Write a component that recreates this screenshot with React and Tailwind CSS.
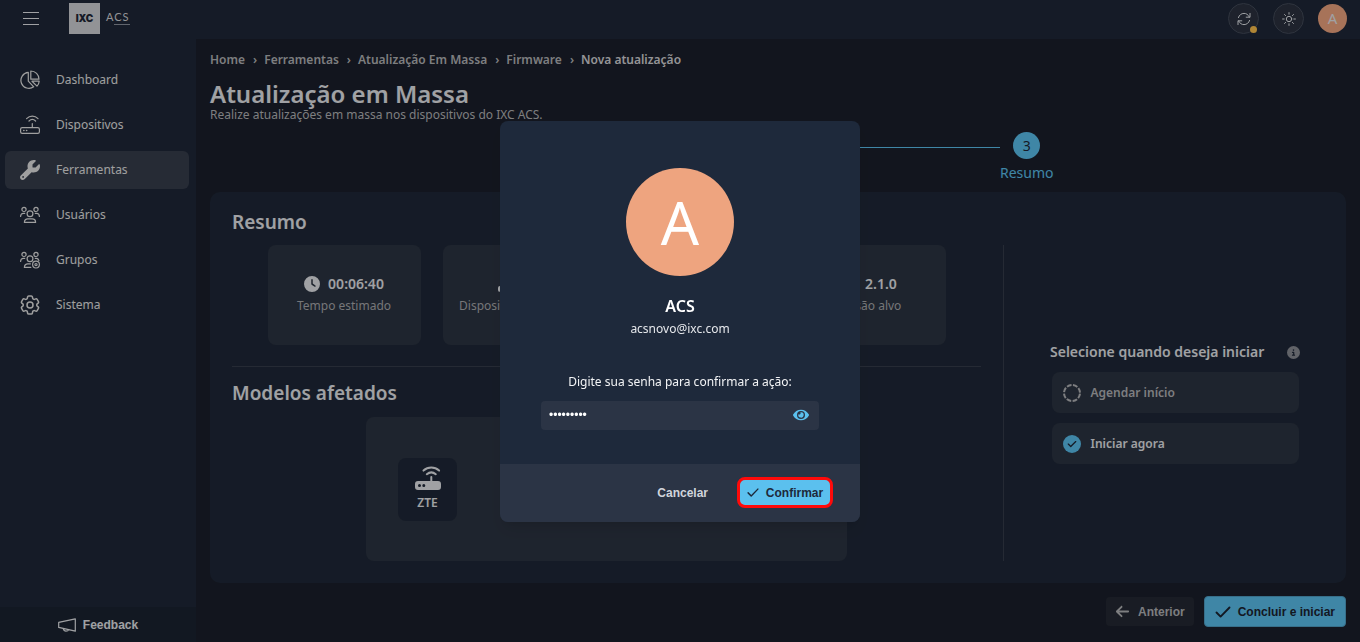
import { FaEye } from "react-icons/fa";
import { FaArrowLeft, FaCheck, FaCircleInfo, FaClock, FaWrench } from "react-icons/fa6";
import { HiOutlineCog6Tooth } from "react-icons/hi2";

function ChartPieIcon() {
    return (
        <svg viewBox="0 0 20 20" className="size-5" fill="none" stroke="currentColor" strokeWidth="1.2" strokeLinejoin="round">
            <path d="M8.3 2.4a8 8 0 1 0 5.4 14.4L8.3 11.2z" />
            <path d="M10.8 1v8.2H19A8.2 8.2 0 0 0 10.8 1z" />
            <path d="M12 11.2h7.2a8 8 0 0 1-2.2 4.9z" />
        </svg>
    );
}

function RouterIcon() {
    return (
        <svg viewBox="0 0 20 20" className="size-5" fill="none" stroke="currentColor" strokeWidth="1.2" strokeLinecap="round">
            <rect x="0.6" y="12.6" width="18.8" height="5.8" rx="1.6" />
            <path d="M12.3 12.4V8.6M6.6 3.6c3.2-3.2 8.2-3.2 11.4 0M9 6c1.9-1.8 4.7-1.8 6.6 0" />
            <path d="M3.8 15.5h.1M6.6 15.5h.1" strokeWidth="1.6" />
        </svg>
    );
}

function RouterSolidIcon({ className }) {
    return (
        <svg viewBox="0 0 26 24" className={className} fill="none" stroke="currentColor" strokeWidth="2" strokeLinecap="round">
            <path d="M16.3 15v-4M8.5 4.6c4.5-4 11.1-4 15.6 0M11.8 8.2c2.7-2.2 6.3-2.2 9 0" />
            <path
                d="M3 15h20a3 3 0 0 1 3 3v3a3 3 0 0 1-3 3H3a3 3 0 0 1-3-3v-3a3 3 0 0 1 3-3zm1.5 3a1.5 1.5 0 1 0 0 3 1.5 1.5 0 0 0 0-3zm4.3 0a1.5 1.5 0 1 0 0 3 1.5 1.5 0 0 0 0-3z"
                fill="currentColor"
                fillRule="evenodd"
                stroke="none"
            />
        </svg>
    );
}

function UsersIcon() {
    return (
        <svg viewBox="0 0 20 20" className="size-5" fill="none" stroke="currentColor" strokeWidth="1.2" strokeLinecap="round" strokeLinejoin="round">
            <circle cx="4" cy="4.4" r="2.1" />
            <circle cx="16" cy="4.4" r="2.1" />
            <circle cx="10" cy="8.8" r="2.9" />
            <path d="M.6 11.4c0-1.9 1.1-3 2.7-3h1.4M19.4 11.4c0-1.9-1.1-3-2.7-3h-1.4" />
            <path d="M4.4 17.4c0-2.3 1.4-3.6 3.4-3.6h4.4c2 0 3.4 1.3 3.4 3.6z" />
        </svg>
    );
}

function GroupsIcon() {
    return (
        <svg viewBox="0 0 20 20" className="size-5" fill="none" stroke="currentColor" strokeWidth="1.2" strokeLinecap="round" strokeLinejoin="round">
            <circle cx="4" cy="4.4" r="2.1" />
            <circle cx="16" cy="4.4" r="2.1" />
            <circle cx="10" cy="8.8" r="2.9" />
            <path d="M.6 11.4c0-1.9 1.1-3 2.7-3h1.4M18.9 10.4c-.5-1.2-1.2-2-2.4-2h-1.2" />
            <path d="M10.8 17.4H4.4c0-2.3 1.4-3.6 3.4-3.6h2.6" />
            <circle cx="16" cy="14.6" r="3.4" />
            <circle cx="16" cy="14.6" r="1.1" />
        </svg>
    );
}

function MegaphoneIcon() {
    return (
        <svg viewBox="0 0 18 14" className="h-[14px] w-[18px]" fill="none" stroke="currentColor" strokeWidth="1.2" strokeLinejoin="round">
            <path d="M.7 4.4 17.3.8v12.4L.7 9.4zM5.2 10.6c.4 1.6 1.4 2.6 2.8 2.6s2.4-.6 2.6-1.5" />
        </svg>
    );
}

function RefreshIcon() {
    return (
        <svg viewBox="0 0 14 14" className="size-[14px]" fill="none" stroke="currentColor" strokeWidth="1" strokeLinecap="round" strokeLinejoin="round">
            <path d="M1.4 5.6C2.2 3 4.4 1.4 7 1.4c2.2 0 4 1 5.4 3.6M13 1.4v3.8H9.2M12.6 8.4c-.8 2.6-3 4.2-5.6 4.2-2.2 0-4-1-5.4-3.6M1 12.6V8.8h3.8" />
        </svg>
    );
}

function SunIcon() {
    return (
        <svg viewBox="0 0 14 14" className="size-[14px]" fill="none" stroke="currentColor" strokeWidth="1" strokeLinecap="round">
            <circle cx="7" cy="7" r="2.7" />
            <path d="M7 .6v1.6M7 11.8v1.6M.6 7h1.6M11.8 7h1.6M2.5 2.5l1.1 1.1M10.4 10.4l1.1 1.1M2.5 11.5l1.1-1.1M10.4 3.6l1.1-1.1" />
        </svg>
    );
}

function Navbar() {
    return (
        <header className="flex h-[39px] items-center bg-[#1f2838] pb-[2px] pl-[23px] pr-[13px]">
            <button type="button" aria-label="Menu" className="flex h-[13px] w-4 flex-col justify-between">
                <span className="h-px w-full bg-gray-200" />
                <span className="h-px w-full bg-gray-200" />
                <span className="h-px w-full bg-gray-200" />
            </button>
            <a href="#" className="ml-[30px] flex items-center gap-[6px]">
                <span className="flex h-[31px] w-[31px] items-center justify-center bg-[#d2d3d7] font-['Inter'] text-[10px] font-black text-[#1f2838]">
                    IXC
                </span>
                <span className="pb-1 font-['Lato'] text-[11px] leading-none tracking-[1px] text-[#d2d3d7]">
                    A<span className="border-b border-[#8b919c] pb-px">CS</span>
                </span>
            </a>
            <div className="ml-auto flex items-center gap-[14px] text-gray-200">
                <button type="button" aria-label="Sincronizar" className="relative flex size-[31px] items-center justify-center rounded-full border border-[#434a59] bg-[#2b3240]">
                    <RefreshIcon />
                    <span className="absolute bottom-0 right-px size-[7px] rounded-full bg-[#fcc04d]" />
                </button>
                <button type="button" aria-label="Tema" className="flex size-[31px] items-center justify-center rounded-full border border-[#434a59] bg-[#2b3240]">
                    <SunIcon />
                </button>
                <button type="button" className="flex size-[29px] items-center justify-center rounded-full bg-[#f0a580] text-[15px]">
                    A
                </button>
            </div>
        </header>
    );
}

const menu = [
    { label: "Dashboard", icon: <ChartPieIcon /> },
    { label: "Dispositivos", icon: <RouterIcon /> },
    { label: "Ferramentas", icon: <FaWrench className="size-5" />, active: true },
    { label: "Usuários", icon: <UsersIcon /> },
    { label: "Grupos", icon: <GroupsIcon /> },
    { label: "Sistema", icon: <HiOutlineCog6Tooth className="-mx-[2px] size-6" /> },
];

function Sidebar() {
    return (
        <aside className="flex w-[196px] shrink-0 flex-col bg-[#1f2838]">
            <nav className="flex flex-1 flex-col gap-[7px] pl-[5px] pr-[7px] pt-[22px]">
                {menu.map((item) => (
                    <a
                        key={item.label}
                        href="#"
                        className={`flex h-[38px] items-center gap-4 rounded-md pl-[15px] text-[12px] text-[#e4e4e4] ${item.active ? "bg-[#373e4d]" : ""}`}
                    >
                        {item.icon}
                        {item.label}
                    </a>
                ))}
            </nav>
            <button type="button" className="flex h-[35px] items-center justify-center gap-[7px] bg-[#1b2331] font-['Liberation_Sans'] text-[12px] font-bold text-gray-200">
                <MegaphoneIcon />
                Feedback
            </button>
        </aside>
    );
}

function Breadcrumb() {
    const items = ["Home", "Ferramentas", "Atualização Em Massa", "Firmware"];
    return (
        <nav className="flex gap-[7px] text-[12px] font-semibold leading-4 text-[#b4b5b8]">
            {items.map((item) => (
                <span key={item} className="flex gap-2">
                    <a href="#">{item}</a>
                    <span>›</span>
                </span>
            ))}
            <span className="text-[#d5d5d8]">Nova atualização</span>
        </nav>
    );
}

function Stepper() {
    return (
        <ol className="mx-auto mt-[9px] flex h-[52px] w-[551px] max-w-full items-start">
            {[1, 2].map((n) => (
                <li key={n} className="flex flex-1 items-center">
                    <span className="mx-[14px] flex size-[27px] shrink-0 items-center justify-center rounded-full bg-[#5bc0ee] text-[14px] text-[#1f2838]">
                        {n}
                    </span>
                    <span className="mt-1 h-px flex-1 bg-[#5bc0ee]" />
                </li>
            ))}
            <li className="flex flex-col items-center text-[14px]">
                <span className="flex size-[27px] items-center justify-center rounded-full bg-[#5bc0ee] text-[#1f2838]">3</span>
                <span className="mt-1 leading-5 text-[#5bc0ee]">Resumo</span>
            </li>
        </ol>
    );
}

function InfoCard({ icon, value, label }) {
    return (
        <div className="flex h-[100px] w-[153px] flex-col items-center justify-center rounded-lg bg-[#2c3442]">
            <div className="flex items-center gap-2 text-[14px] font-semibold leading-5 text-gray-200">
                {icon}
                {value}
            </div>
            <div className="mt-[2px] text-[12px] leading-5 text-[#a9aaad]">{label}</div>
        </div>
    );
}

function Resumo() {
    return (
        <div className="flex-1 px-[22px] pb-[22px] pt-4">
            <h2 className="text-[19px] font-semibold leading-7 text-gray-200">Resumo</h2>
            <div className="mt-[9px] flex justify-center gap-[22px]">
                <InfoCard icon={<FaClock className="size-4" />} value="00:06:40" label="Tempo estimado" />
                <InfoCard icon={<RouterSolidIcon className="h-4 w-[17px]" />} value="10" label="Dispositivos afetados" />
                <InfoCard />
                <InfoCard icon={<FaCheck className="size-4" />} value="2.1.0" label="Versão alvo" />
            </div>
            <hr className="mt-[21px] border-[#363d4b]" />
            <h2 className="mt-3 text-[19px] font-semibold leading-7 text-gray-200">Modelos afetados</h2>
            <div className="mx-auto mt-[10px] flex h-[144px] w-[481px] items-center rounded-lg bg-[#2c3442] px-8">
                <div className="flex h-[63px] w-[59px] flex-col items-center justify-center gap-1 rounded-lg bg-[#1f2838] text-gray-200">
                    <RouterSolidIcon className="h-6 w-[26px]" />
                    <span className="text-[12px] font-semibold leading-[18px]">ZTE</span>
                </div>
            </div>
        </div>
    );
}

function Inicio() {
    return (
        <fieldset className="mb-[22px] mt-[53px] flex w-[343px] flex-col items-center justify-center border-l border-[#363d4b]">
            <div className="mb-[10px] flex w-[250px] items-center justify-between text-[14px] font-semibold leading-5 text-gray-200">
                Selecione quando deseja iniciar
                <FaCircleInfo className="size-[13px] text-[#8b8e96]" />
            </div>
            <div className="flex w-[247px] flex-col gap-[10px] text-[12px] font-semibold">
                <label className="flex h-[41px] items-center gap-[10px] rounded-lg bg-[#2c3442] pl-[11px] text-[#b4b5b8]">
                    <input type="radio" name="inicio" className="sr-only" />
                    <svg viewBox="0 0 18 18" className="size-[18px]" fill="none" stroke="currentColor" strokeWidth="2">
                        <circle cx="9" cy="9" r="8" strokeDasharray="4.8 1.483" strokeDashoffset="-0.74" />
                    </svg>
                    Agendar início
                </label>
                <label className="flex h-[41px] items-center gap-[10px] rounded-lg bg-[#2c3442] pl-[11px] text-gray-200">
                    <input type="radio" name="inicio" className="sr-only" defaultChecked />
                    <span className="flex size-[18px] items-center justify-center rounded-full bg-[#5bc0ee] text-[#1f2838]">
                        <FaCheck className="size-[10px]" />
                    </span>
                    Iniciar agora
                </label>
            </div>
        </fieldset>
    );
}

function CheckIcon({ className }) {
    return (
        <svg viewBox="0 0 16 12" className={className} fill="none" stroke="currentColor" strokeWidth="1.9" strokeLinecap="round" strokeLinejoin="round">
            <path d="M1.5 6.5 5.6 10.6 14.5 1.5" />
        </svg>
    );
}

function ConfirmDialog() {
    return (
        <div className="fixed inset-0 z-30 flex items-center justify-center bg-black/30">
            <form
                role="dialog"
                aria-label="Confirmar"
                className="flex w-[360px] flex-col overflow-hidden rounded-lg bg-[#1e293b] text-white shadow-lg"
                onSubmit={(e) => e.preventDefault()}
            >
                <div className="flex flex-col items-center px-[41px] pb-[34px] pt-[47px]">
                    <div className="flex size-[108px] items-center justify-center rounded-full bg-[#eea47f] text-[60px]">A</div>
                    <div className="mt-5 text-[16px] font-semibold leading-5">ACS</div>
                    <div className="mt-[3px] text-[12px] leading-5 text-gray-200">acsnovo@ixc.com</div>
                    <label htmlFor="senha" className="mt-[33px] text-[12px] leading-5 text-gray-100">
                        Digite sua senha para confirmar a ação:
                    </label>
                    <div className="mt-[9px] flex h-[29px] w-full items-center rounded bg-[#2b3445] px-2">
                        <input
                            id="senha"
                            type="password"
                            defaultValue="senha1234"
                            className="min-w-0 flex-1 bg-transparent font-['Liberation_Sans'] text-[12px] outline-none"
                        />
                        <button type="button" aria-label="Mostrar senha" className="mr-[2px] text-[#5bc0ee]">
                            <FaEye className="size-4" />
                        </button>
                    </div>
                </div>
                <div className="flex h-[58px] items-center justify-end gap-[29px] bg-[#2b3445] pr-[27px] font-['Liberation_Sans'] text-[12px] font-bold">
                    <button type="button" className="text-gray-300">
                        Cancelar
                    </button>
                    <button type="submit" className="flex h-[31px] w-24 items-center justify-center gap-[7px] rounded-lg border-[3px] border-[#ff0a0a] bg-[#5bc0ee] text-[#1e293b]">
                        <CheckIcon className="h-[9px] w-3" />
                        Confirmar
                    </button>
                </div>
            </form>
        </div>
    );
}

export default function App() {
    return (
        <div className="flex min-h-screen flex-col bg-[#1b1f2b] font-['Noto_Sans',sans-serif]">
            <Navbar />
            <div className="flex flex-1">
                <Sidebar />
                <main className="flex min-w-0 flex-1 flex-col px-[14px] pb-[14px] pt-[13px]">
                    <Breadcrumb />
                    <h1 className="mt-[14px] text-[24px] font-semibold leading-6 text-gray-200">Atualização em Massa</h1>
                    <p className="mt-px text-[12px] leading-4 text-[#b4b5b8]">Realize atualizações em massa nos dispositivos do IXC ACS.</p>
                    <Stepper />
                    <section className="mt-2 flex rounded-[10px] bg-[#1f2838]">
                        <Resumo />
                        <Inicio />
                    </section>
                    <div className="mt-[13px] flex items-center justify-end gap-[10px] font-['Liberation_Sans'] text-[12px] font-bold">
                        <button type="button" className="flex h-[29px] items-center gap-2 rounded bg-[#252934] px-[9px] text-[#b4b5b8]">
                            <FaArrowLeft className="size-[15px]" />
                            Anterior
                        </button>
                        <button type="button" className="flex h-[31px] items-center gap-[7px] rounded border border-[#4f9fc6] bg-[#5bc0ee] px-[10px] text-[#1b2331]">
                            <CheckIcon className="h-3 w-4" />
                            Concluir e iniciar
                        </button>
                    </div>
                </main>
            </div>
            <ConfirmDialog />
        </div>
    );
}
